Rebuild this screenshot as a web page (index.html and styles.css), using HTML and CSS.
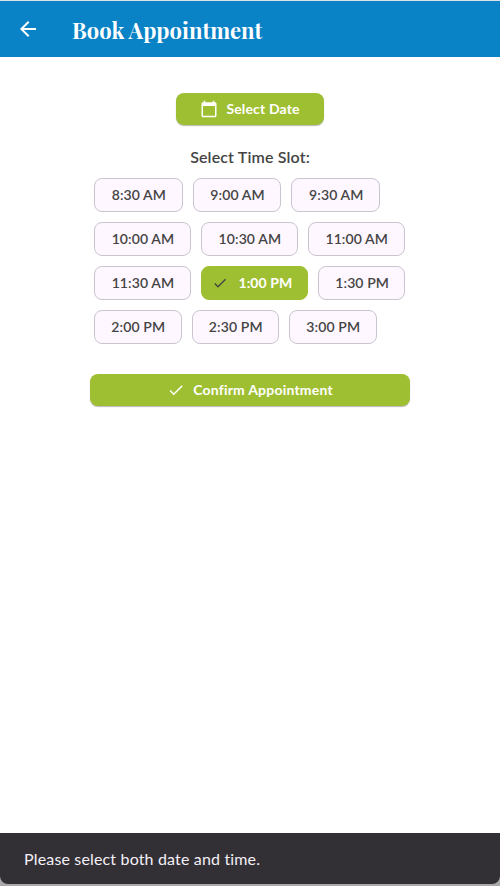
FILE: index.html
```html
<!DOCTYPE html>
<html lang="en">
<head>
<meta charset="utf-8">
<title>Book Appointment</title>
<link rel="stylesheet" href="styles.css">
</head>
<body>
<div class="app">
  <header class="app-bar">
    <svg class="back" viewBox="0 0 24 24"><path d="M20 11H7.83l5.59-5.59L12 4l-8 8 8 8 1.41-1.41L7.83 13H20v-2z"/></svg>
    <h1 class="title">Book Appointment</h1>
  </header>
  <main class="content">
    <button class="btn date-btn">
      <svg class="calendar" viewBox="0 0 24 24"><path d="M20 3h-1V1h-2v2H7V1H5v2H4c-1.1 0-2 .9-2 2v16c0 1.1.9 2 2 2h16c1.1 0 2-.9 2-2V5c0-1.100-.9-2-2-2zm0 18H4V8h16v13z"/></svg>
      <span>Select Date</span>
    </button>
    <h2 class="heading">Select Time Slot:</h2>
    <div class="slots">
      <div class="row"><button class="slot am">8:30 AM</button><button class="slot am">9:00 AM</button><button class="slot am">9:30 AM</button></div>
      <div class="row"><button class="slot wide">10:00 AM</button><button class="slot wide">10:30 AM</button><button class="slot wide">11:00 AM</button></div>
      <div class="row"><button class="slot wide">11:30 AM</button><button class="slot selected"><svg class="check" viewBox="0 0 24 24"><path d="M9 16.170L4.830 12l-1.420 1.410L9 19 21 7l-1.410-1.410z"/></svg><span>1:00 PM</span></button><button class="slot pm">1:30 PM</button></div>
      <div class="row"><button class="slot pm">2:00 PM</button><button class="slot pm">2:30 PM</button><button class="slot pm">3:00 PM</button></div>
    </div>
    <button class="btn confirm-btn">
      <svg class="check" viewBox="0 0 24 24"><path d="M9 16.170L4.830 12l-1.420 1.410L9 19 21 7l-1.410-1.410z"/></svg>
      <span>Confirm Appointment</span>
    </button>
  </main>
  <div class="snackbar-area"><div class="snackbar">Please select both date and time.</div></div>
</div>
</body>
</html>
```
FILE: styles.css
```css
* { box-sizing: border-box; }
body { margin: 0; background: #fff; font-family: Lato, sans-serif; color: #444; }
.app { height: 886px; display: flex; flex-direction: column; overflow: hidden; }
.app-bar { height: 57px; flex: none; display: flex; align-items: center; border-top: 1px solid #d9e2e6; background: #0982c6; padding-left: 16px; }
.back { width: 24px; height: 24px; fill: #fff; }
.title { margin: 2px 0 0 32px; font: 700 22px/32px "Playfair Display", "Liberation Serif", serif; color: #fff; white-space: nowrap; }
.content { flex: 1; display: flex; flex-direction: column; align-items: center; padding-top: 36px; }
button { font-family: inherit; border: 0; margin: 0; padding: 0; white-space: nowrap; }
.btn { height: 32px; flex: none; display: flex; align-items: center; justify-content: center; border-radius: 8px; background: #9fbf33; color: #fff; font-size: 14px; line-height: 20px; font-weight: 700; letter-spacing: .15px; box-shadow: 0 1px 1px rgba(0,0,0,.28); }
.btn svg { fill: #fff; }
.date-btn { width: 148px; gap: 8px; }
.calendar { width: 18px; height: 18px; }
.heading { margin: 20px 0 10px; font-size: 16px; line-height: 23px; font-weight: 600; letter-spacing: .15px; }
.slots { width: 312px; display: flex; flex-direction: column; gap: 10px; }
.row { display: flex; gap: 10px; }
.slot { height: 34px; flex: none; display: flex; align-items: center; justify-content: center; border: 1px solid #cac4d0; border-radius: 8px; background: #fef7ff; color: #444; font-size: 14px; line-height: 20px; font-weight: 600; letter-spacing: .1px; padding-left: 1px; }
.am { width: 88.7px; }
.wide { width: 96.9px; }
.pm { width: 87.5px; }
.selected { width: 107px; border-color: #9fbf33; background: #9fbf33; color: #fff; font-weight: 700; gap: 10px; padding: 0 4px 0 0; }
.selected .check { fill: #444; }
.check { width: 16px; height: 16px; }
.confirm-btn { width: 320px; margin-top: 30px; gap: 8px; letter-spacing: .2px; }
.confirm-btn .check { width: 18px; height: 18px; }
.snackbar-area { height: 53px; flex: none; background: #aaa8aa; }
.snackbar { height: 51px; background: #322f35; border-radius: 0 0 8px 8px; padding: 15px 24px; color: #f5eff7; font-size: 16px; line-height: 22px; letter-spacing: .16px; }
```
